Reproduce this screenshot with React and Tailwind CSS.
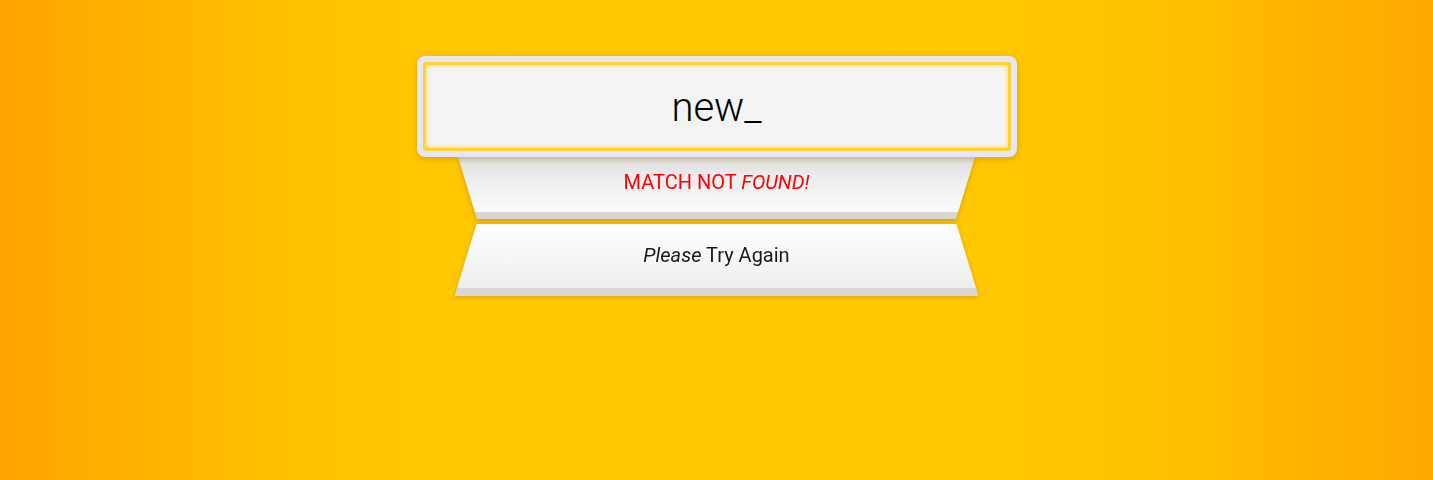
import React from "react";

export default function App() {
  return (
    <div
      className="w-full h-[480px] flex flex-col items-center pt-[56px] bg-[linear-gradient(to_right,#ffa400_0%,#ffbb00_15%,#ffc700_28%,#ffc800_70%,#ffbd00_85%,#ffa800_100%)]"
      style={{ fontFamily: "Roboto, 'Noto Sans', sans-serif" }}
    >
      <div className="relative z-10 w-[600px] h-[101px] rounded-[8px] bg-[#e6e6f8] p-[6px] shadow-[0_2px_6px_rgba(150,100,0,0.35)]">
        <div className="w-full h-full rounded-[3px] border-[3px] border-[#ffd22e] bg-[#f4f4f4] shadow-[inset_0_0_4px_rgba(255,205,40,0.9)] flex items-center justify-center">
          <span className="text-[40px] font-light text-black leading-none pt-[3px]">new_</span>
        </div>
      </div>

      <div className="[filter:drop-shadow(0_2px_2px_rgba(160,110,0,0.45))]">
        <div className="w-[517px] h-[62px] flex flex-col [clip-path:polygon(0_0,100%_0,calc(100%_-_19px)_100%,19px_100%)]">
          <div className="flex-1 bg-[linear-gradient(to_bottom,#dcdcdc_0%,#ececec_35%,#fbfbfb_100%)] flex items-center justify-center pb-[5px]">
            <span className="text-[20px] text-[#ff0000] leading-none">
              MATCH NOT <i>FOUND!</i>
            </span>
          </div>
          <div className="h-[7px] bg-[#d6d6d6]" />
        </div>
      </div>

      <div className="mt-[5px] [filter:drop-shadow(0_1px_2px_rgba(160,110,0,0.4))]">
        <div className="w-[524px] h-[72px] flex flex-col [clip-path:polygon(22px_0,calc(100%_-_22px)_0,100%_100%,0_100%)]">
          <div className="flex-1 bg-[linear-gradient(to_bottom,#ffffff_0%,#f7f7f7_50%,#eeeeee_100%)] flex items-center justify-center pb-[2px]">
            <span className="text-[20px] text-[#1a1a1a] leading-none">
              <i>Please</i> Try Again
            </span>
          </div>
          <div className="h-[8px] bg-[#d8d8d8]" />
        </div>
      </div>
    </div>
  );
}
